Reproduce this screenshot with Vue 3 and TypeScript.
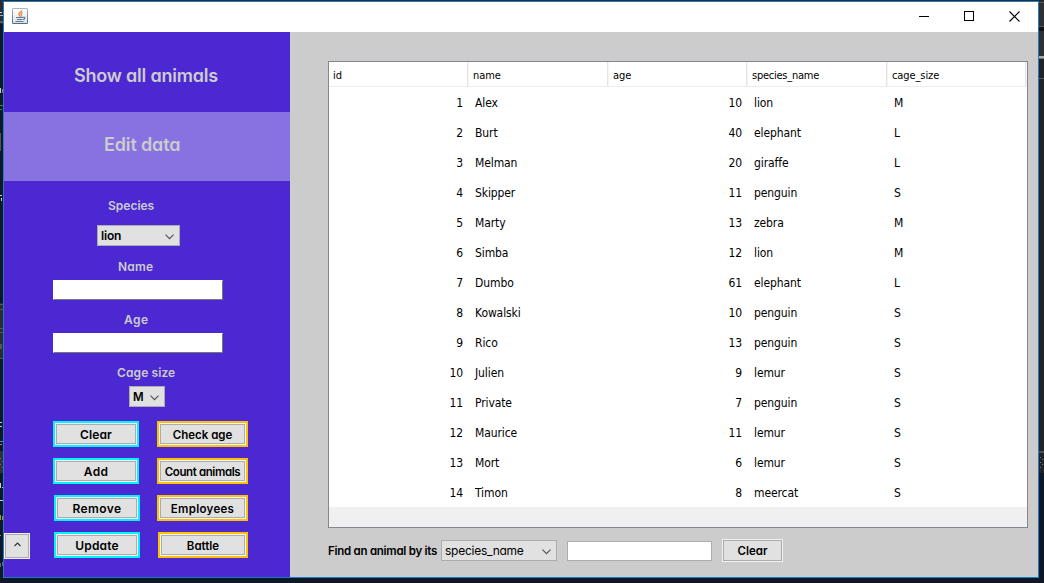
<script setup lang="ts">
import { ref } from 'vue'

interface Animal {
  id: number
  name: string
  age: number
  species: string
  cage: string
}

const columns = ['id', 'name', 'age', 'species_name', 'cage_size']

const raw: [string, number, string, string][] = [
  ['Alex', 10, 'lion', 'M'],
  ['Burt', 40, 'elephant', 'L'],
  ['Melman', 20, 'giraffe', 'L'],
  ['Skipper', 11, 'penguin', 'S'],
  ['Marty', 13, 'zebra', 'M'],
  ['Simba', 12, 'lion', 'M'],
  ['Dumbo', 61, 'elephant', 'L'],
  ['Kowalski', 10, 'penguin', 'S'],
  ['Rico', 13, 'penguin', 'S'],
  ['Julien', 9, 'lemur', 'S'],
  ['Private', 7, 'penguin', 'S'],
  ['Maurice', 11, 'lemur', 'S'],
  ['Mort', 6, 'lemur', 'S'],
  ['Timon', 8, 'meercat', 'S'],
]
const animals: Animal[] = raw.map(([name, age, species, cage], i) => ({ id: i + 1, name, age, species, cage }))

const editActions = ['Clear', 'Add', 'Remove', 'Update']
const queryActions = ['Check age', 'Count animals', 'Employees', 'Battle']

const name = ref('')
const age = ref('')
const search = ref('')
</script>

<template>
  <div class="desktop">
    <svg class="backdrop" width="1044" height="583" shape-rendering="crispEdges">
      <rect width="1044" height="583" fill="#0e1726" />
      <rect width="1044" height="24" fill="#2b2c30" />
      <rect y="21" width="3" height="2" fill="#595a5d" />
      <rect y="12" width="2" height="1" fill="#ccc" /><rect y="15" width="3" height="1" fill="#aaa" />
      <rect y="88" width="1" height="5" fill="#ccc" /><rect x="2" y="89" width="1" height="4" fill="#b66" />
      <rect y="105" width="3" height="1" fill="#1b9b2a" /><rect y="109" width="2" height="1" fill="#1b9b2a" />
      <rect y="133" width="1" height="18" fill="#555" />
      <rect y="195" width="2" height="1" fill="#ccc" /><rect x="1" y="198" width="1" height="3" fill="#ccc" />
      <rect y="303" width="3" height="56" fill="#2b2c30" />
      <rect y="304" width="3" height="1" fill="#555" /><rect y="309" width="3" height="1" fill="#555" />
      <rect y="328" width="3" height="1" fill="#555" /><rect y="332" width="3" height="1" fill="#555" />
      <rect y="344" width="2" height="5" fill="#555" /><rect y="358" width="3" height="1" fill="#555" />
      <rect y="422" width="2" height="1" fill="#ccc" /><rect y="426" width="2" height="1" fill="#ccc" />
      <rect y="441" width="3" height="1" fill="#5d88ac" /><rect y="444" width="2" height="1" fill="#c08040" />
      <rect y="451" width="3" height="22" fill="#303134" />
      <rect y="458" width="1" height="1" fill="#666" /><rect x="2" y="461" width="1" height="1" fill="#666" />
      <rect y="464" width="1" height="1" fill="#666" /><rect x="2" y="467" width="1" height="1" fill="#666" />
      <rect y="483" width="1" height="5" fill="#ccc" /><rect x="2" y="487" width="1" height="1" fill="#ccc" />
      <rect y="500" width="3" height="1" fill="#ccc" />
      <rect y="515" width="1" height="5" fill="#a99b1c" /><rect x="2" y="516" width="1" height="4" fill="#a99b1c" />
      <rect y="535" width="1" height="1" fill="#c08040" />
      <rect y="563" width="1" height="4" fill="#666" /><rect x="2" y="562" width="1" height="4" fill="#666" />
      <rect x="1039" width="5" height="473" fill="#222327" />
      <rect x="1039" y="1" width="5" height="26" fill="#2f3034" />
      <rect x="1039" y="2" width="5" height="1" fill="#55565a" />
      <rect x="1039" y="26" width="5" height="1" fill="#55565a" />
      <rect x="1039" y="27" width="5" height="4" fill="#111" />
      <rect x="1039" y="31" width="5" height="25" fill="#2f3034" />
      <rect x="1039" y="56" width="5" height="2" fill="#aaa" /><rect x="1039" y="58" width="5" height="1" fill="#777" />
      <rect x="1039" y="78" width="5" height="1" fill="#55565a" />
      <rect x="1039" y="451" width="5" height="2" fill="#505154" />
      <rect x="1040" y="457" width="1" height="1" fill="#777" /><rect x="1042" y="459" width="1" height="1" fill="#777" />
      <rect x="1040" y="462" width="1" height="1" fill="#777" /><rect x="1042" y="464" width="1" height="1" fill="#777" />
      <rect x="1040" y="467" width="1" height="1" fill="#777" />
    </svg>

    <div class="window">
      <header class="titlebar">
        <svg class="java" width="16" height="16" viewBox="0 0 16 16">
          <defs>
            <linearGradient id="frame" x1="0" y1="0" x2="0" y2="1">
              <stop offset="0" stop-color="#a9b7c1" /><stop offset="1" stop-color="#4c6880" />
            </linearGradient>
            <linearGradient id="face" x1="0" y1="0" x2="0" y2="1">
              <stop offset="0" stop-color="#fff" /><stop offset="1" stop-color="#dfe4e8" />
            </linearGradient>
          </defs>
          <rect width="16" height="16" rx="1.5" fill="url(#frame)" />
          <rect x="1" y="1" width="14" height="14" rx="0.5" fill="url(#face)" />
          <path d="M9.8 2.2C9.8 4 6.5 4.600 6.800 6.200C7 7.200 8 7.600 8 8.700M10.600 4.600C8.600 5.400 8.600 6.200 9.300 7.200C9.600 7.800 9.200 8.300 8.800 8.700" fill="none" stroke="#e5832c" stroke-width="1.200" />
          <path d="M4 9.500H11M5 11.500H10.200M3.500 13.500H11.500M11 9.200C13.600 8.400 13.600 11 10.800 11.500" fill="none" stroke="#587b98" stroke-width="1.100" />
        </svg>
        <div class="controls">
          <svg width="10" height="10" shape-rendering="crispEdges"><path d="M0 5.500H10" stroke="#000" /></svg>
          <svg width="10" height="10" shape-rendering="crispEdges"><rect x="0.500" y="0.500" width="9" height="9" fill="none" stroke="#000" /></svg>
          <svg width="11" height="11"><path d="M0.500 0.500L10.500 10.500M10.500 0.500L0.500 10.500" stroke="#000" stroke-width="1.100" /></svg>
        </div>
      </header>

      <div class="content">
        <aside class="sidebar">
          <div class="nav show-all"><span>Show all animals</span></div>
          <div class="nav edit"><span>Edit data</span></div>
          <div class="form">
            <label class="caption species">Species</label>
            <div class="combo species-combo">
              <span>lion</span>
              <svg width="9" height="6"><path d="M0.500 0.700L4.500 4.700L8.500 0.700" fill="none" stroke="#555" stroke-width="1.200" /></svg>
            </div>
            <label class="caption name">Name</label>
            <input v-model="name" class="field" />
            <label class="caption age">Age</label>
            <input v-model="age" class="field" />
            <label class="caption cage">Cage size</label>
            <div class="combo cage-combo">
              <span>M</span>
              <svg width="9" height="6"><path d="M0.500 0.700L4.500 4.700L8.500 0.700" fill="none" stroke="#555" stroke-width="1.200" /></svg>
            </div>
          </div>
          <div class="actions">
            <div class="column">
              <button v-for="a in editActions" :key="a" class="btn cyan" :class="a.toLowerCase()"><span>{{ a }}</span></button>
            </div>
            <div class="column right">
              <button v-for="a in queryActions" :key="a" class="btn gold" :class="a.toLowerCase().split(' ')[0]"><span>{{ a }}</span></button>
            </div>
          </div>
          <button class="btn collapse">
            <svg width="7" height="5"><path d="M0.500 4L3.500 1L6.500 4" fill="none" stroke="#333" stroke-width="1.100" /></svg>
          </button>
        </aside>

        <main class="main">
          <div class="table">
            <div class="row head">
              <div v-for="c in columns" :key="c" class="th"><span :class="c">{{ c }}</span></div>
            </div>
            <div v-for="a in animals" :key="a.id" class="row">
              <div class="td num">{{ a.id }}</div>
              <div class="td">{{ a.name }}</div>
              <div class="td num">{{ a.age }}</div>
              <div class="td">{{ a.species }}</div>
              <div class="td">{{ a.cage }}</div>
            </div>
          </div>
          <div class="finder">
            <span class="find-label">Find an animal by its</span>
            <div class="combo find-combo">
              <span>species_name</span>
              <svg width="9" height="6"><path d="M0.500 0.700L4.500 4.700L8.500 0.700" fill="none" stroke="#555" stroke-width="1.200" /></svg>
            </div>
            <input v-model="search" class="search" />
            <button class="btn find-clear"><span>Clear</span></button>
          </div>
        </main>
      </div>
    </div>
  </div>
</template>

<style>
html, body { overflow: hidden; }
</style>

<style scoped>
* { box-sizing: border-box; }
.desktop {
  position: relative;
  width: 1044px;
  height: 583px;
  padding: 1px 0 0 3px;
  overflow: hidden;
  font-family: Inter, "Open Sans", sans-serif;
  font-feature-settings: "cv11" 1;
}
.backdrop { position: absolute; left: 0; top: 0; }
.window {
  position: relative;
  display: flex;
  flex-direction: column;
  width: 1036px;
  height: 577px;
  border: 1px solid #1c7cc9;
  background: #ccc;
}
.titlebar {
  display: flex;
  justify-content: space-between;
  height: 30px;
  padding: 6px 18px 0 8px;
  background: #fff;
}
.controls { display: flex; gap: 35px; padding-top: 3px; }
.content { display: flex; flex: 1; }
.sidebar {
  position: relative;
  width: 286px;
  background: #4c28d3;
  color: #ccc;
}
.nav {
  display: flex;
  align-items: center;
  font-size: 18px;
  font-weight: 600;
  line-height: 24px;
  white-space: nowrap;
}
.show-all { height: 80px; padding: 8px 0 0 70px; }
.show-all span { letter-spacing: -0.2px; }
.edit { height: 69px; padding: 0 0 3px 100px; background: #8871e1; }
.edit span { letter-spacing: -0.15px; }
.form { display: flex; flex-direction: column; height: 240px; padding-top: 17px; }
.caption { height: 16px; font-size: 12px; font-weight: 600; line-height: 16px; }
.caption.species { margin-left: 104px; }
.caption.name { margin: 13px 0 5px 114px; letter-spacing: 0.2px; }
.caption.age { margin: 12px 0 5px 120px; letter-spacing: 0.5px; }
.caption.cage { margin: 12px 0 5px 113px; letter-spacing: 0.1px; }
.combo {
  display: flex;
  align-items: center;
  justify-content: space-between;
  height: 21px;
  padding: 1px 5px 0 3px;
  border: 1px solid #acacb0;
  background: #e1e1e1;
  color: #000;
  font-size: 12px;
  font-weight: 600;
  line-height: 16px;
}
.combo svg { position: relative; top: 1px; }
.species-combo { width: 83px; margin: 11px 0 0 93px; }
.species-combo span { letter-spacing: -0.2px; }
.cage-combo { width: 36px; margin-left: 125px; }
.cage-combo span { font-size: 11.500px; }
.field {
  width: 170px;
  height: 20px;
  flex: none;
  margin-left: 49px;
  padding: 0 3px;
  border: 1px solid;
  border-color: #fff #777 #777 #fff;
  outline: none;
  background: #fff;
}
.actions { display: flex; gap: 18px; padding-left: 49px; }
.column { display: flex; flex-direction: column; gap: 11px; width: 86px; }
.column.right { width: 91px; }
.btn {
  display: flex;
  align-items: center;
  justify-content: center;
  width: 86px;
  height: 26px;
  margin: 0;
  padding: 0;
  border: 2px solid;
  outline: 1px solid #acacac;
  outline-offset: -4px;
  box-shadow: inset 0 0 0 1px #f7f7f7;
  background: #e1e1e1;
  color: #000;
  font: 600 12px/16px Inter, "Open Sans", sans-serif;
  font-feature-settings: "cv11" 1;
  white-space: nowrap;
}
.cyan, .gold { padding-top: 2px; }
.cyan { border-color: #00f6ff; }
.gold { width: 91px; border-color: #ffc000; font-size: 11.500px; }
.remove, .update { margin-left: 1px; }
.clear { letter-spacing: 0.15px; }
.add { letter-spacing: 0.3px; }
.remove { letter-spacing: 0.4px; }
.update { letter-spacing: 0.15px; }
.count { letter-spacing: -0.4px; }
.employees { letter-spacing: 0.3px; }
.battle { width: 90px; margin-left: 1px; }
.btn.collapse, .btn.find-clear {
  border: 1px solid #f0f0f0;
  outline-offset: -2px;
  box-shadow: none;
}
.btn.collapse { position: absolute; left: 0; top: 501px; width: 26px; height: 26px; }
.collapse svg { margin-bottom: 3px; }
.main { flex: 1; padding: 29px 0 0 38px; }
.table {
  width: 700px;
  height: 467px;
  border: 1px solid #828790;
  background: linear-gradient(#fff 445px, #f0f0f0 445px);
  color: #000;
  font-family: "DejaVu Sans Condensed", "DejaVu Sans", sans-serif;
  font-stretch: condensed;
  font-feature-settings: normal;
}
.row { display: grid; grid-template-columns: 140px 140px 139px 140px 139px; height: 30px; }
.head { height: 25px; border-bottom: 1px solid #ededed; }
.th {
  position: relative;
  padding: 6px 0 0 4px;
  font-size: 11px;
  line-height: 16px;
  letter-spacing: -0.1px;
}
.th::after {
  content: "";
  position: absolute;
  top: 0;
  right: 0;
  width: 2px;
  height: 24px;
  background: linear-gradient(90deg, #e3e3e3 50%, #f5f5f5 50%);
}
.th .species_name { letter-spacing: -0.25px; }
.td { padding: 8px 0 0 6px; font-size: 12px; line-height: 17px; letter-spacing: -0.1px; }
.num { padding: 8px 6px 0 0; text-align: right; }
.finder { display: flex; height: 47px; padding-top: 11px; color: #000; }
.find-label { width: 113px; padding-top: 4px; font-size: 11.500px; font-weight: 600; line-height: 16px; white-space: nowrap; letter-spacing: -0.26px; }
.find-combo { width: 116px; margin-top: 1px; font-weight: 400; }
.find-combo span { letter-spacing: -0.25px; }
.search {
  width: 145px;
  height: 20px;
  margin: 2px 10px 0 10px;
  padding: 0 3px;
  border: 1px solid #abadb3;
  outline: none;
  background: #fff;
}
.btn.find-clear { width: 61px; height: 23px; padding-top: 1px; font-size: 11.500px; }
</style>
